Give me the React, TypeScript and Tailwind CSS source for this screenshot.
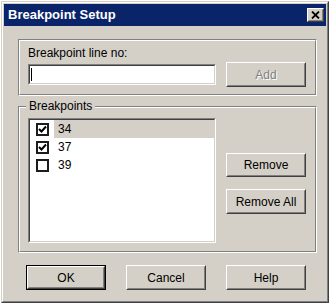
import React from "react";

// classic win2k raised button
const Btn: React.FC<{ label: string; disabled?: boolean; isDefault?: boolean; h?: string }> = ({
  label,
  disabled,
  isDefault,
  h = "h-[25px]",
}) => {
  const inner = (
    <div className="h-full border border-t-white border-l-white border-r-[#404040] border-b-[#404040]">
      <div className="h-full flex items-center justify-center border border-t-[#d4d0c8] border-l-[#d4d0c8] border-r-[#808080] border-b-[#808080]">
        <span
          className={
            disabled
              ? "text-[#808080] [text-shadow:1px_1px_0_#ffffff]"
              : "text-black"
          }
        >
          {label}
        </span>
      </div>
    </div>
  );
  return (
    <div className={`w-[80px] ${h} ${isDefault ? "border border-black" : ""}`}>{inner}</div>
  );
};

// sunken field (input, list)
const Sunken: React.FC<{ className?: string; children?: React.ReactNode }> = ({ className, children }) => (
  <div className={`border border-t-[#808080] border-l-[#808080] border-r-white border-b-white ${className ?? ""}`}>
    <div className="h-full border border-t-[#404040] border-l-[#404040] border-r-[#d4d0c8] border-b-[#d4d0c8] bg-white">
      {children}
    </div>
  </div>
);

// etched group frame
const Group: React.FC<{ legend?: string; className?: string; children: React.ReactNode }> = ({
  legend,
  className,
  children,
}) => (
  <div className={`relative border border-t-[#808080] border-l-[#808080] border-r-white border-b-white ${className ?? ""}`}>
    <div className="h-full border border-t-white border-l-white border-r-[#808080] border-b-[#808080]">
      {children}
    </div>
    {legend && (
      <span className="absolute left-[7px] top-[-8px] bg-[#d4d0c8] px-[3px] leading-[14px]">{legend}</span>
    )}
  </div>
);

const CheckBox: React.FC<{ checked: boolean }> = ({ checked }) => (
  <div className="w-[13px] h-[13px] border-2 border-[#1c1c1c] bg-white flex items-center justify-center">
    {checked && (
      <svg width="9" height="9" viewBox="0 0 9 9">
        <path d="M1 4 L3.5 6.5 L8 1.5" fill="none" stroke="#000" strokeWidth="2" />
      </svg>
    )}
  </div>
);

const rows = [
  { n: "34", checked: true, selected: true },
  { n: "37", checked: true, selected: false },
  { n: "39", checked: false, selected: false },
];

export default function App() {
  return (
    <div
      className="w-[333px] h-[307px] bg-white text-[12px] text-black"
      style={{ fontFamily: '"Liberation Sans", Arial, sans-serif' }}
    >
      <div className="ml-[1px] mt-[1px] w-[328px] h-[302px] border border-t-[#d4d0c8] border-l-[#d4d0c8] border-r-[#404040] border-b-[#404040] bg-[#d4d0c8]">
        <div className="h-full border border-t-white border-l-white border-r-[#808080] border-b-[#808080] p-[1px] flex flex-col">
          {/* title bar */}
          <div className="h-[22px] bg-[#0a246a] flex items-center justify-between pl-[4px] pr-[2px]">
            <span className="text-white font-bold text-[13px]">Breakpoint Setup</span>
            <div className="w-[17px] h-[14px] border border-t-white border-l-white border-r-[#404040] border-b-[#404040] bg-[#d4d0c8]">
              <div className="h-full flex items-center justify-center border border-t-[#d4d0c8] border-l-[#d4d0c8] border-r-[#808080] border-b-[#808080]">
                <svg width="9" height="8" viewBox="0 0 9 8">
                  <path d="M1 0.5 L8 7.5 M8 0.5 L1 7.5" stroke="#000" strokeWidth="1.8" />
                </svg>
              </div>
            </div>
          </div>

          {/* body */}
          <div className="pl-[14px] pr-[9px] pt-[13px] flex flex-col">
            <Group className="h-[57px]">
              <div className="pl-[8px] pr-[9px] pt-[5px] flex flex-col">
                <span className="leading-[14px]">Breakpoint line no:</span>
                <div className="mt-[2px] flex items-center gap-[10px]">
                  <Sunken className="w-[188px] h-[21px]">
                    <div className="h-full flex items-center pl-[1px]">
                      <span className="w-[1px] h-[13px] bg-black" />
                    </div>
                  </Sunken>
                  <Btn label="Add" disabled />
                </div>
              </div>
            </Group>

            <Group legend="Breakpoints" className="mt-[10px] h-[147px]">
              <div className="h-full pl-[8px] pr-[9px] pt-[10px] pb-[8px] flex gap-[10px]">
                <Sunken className="w-[188px] h-full">
                  <div className="flex flex-col">
                    {rows.map((r) => (
                      <div key={r.n} className="h-[18px] flex items-center">
                        <div className="pl-[6px] pr-[5px]">
                          <CheckBox checked={r.checked} />
                        </div>
                        <div
                          className={`flex-1 h-full flex items-center pl-[4px] ${r.selected ? "bg-[#d4d0c8]" : ""}`}
                        >
                          {r.n}
                        </div>
                      </div>
                    ))}
                  </div>
                </Sunken>
                <div className="flex flex-col pt-[35px] gap-[12px]">
                  <Btn label="Remove" h="h-[24px]" />
                  <Btn label="Remove All" h="h-[25px]" />
                </div>
              </div>
            </Group>

            <div className="mt-[12px] pl-[8px] flex gap-[20px]">
              <Btn label="OK" isDefault />
              <Btn label="Cancel" />
              <Btn label="Help" />
            </div>
          </div>
        </div>
      </div>
    </div>
  );
}
